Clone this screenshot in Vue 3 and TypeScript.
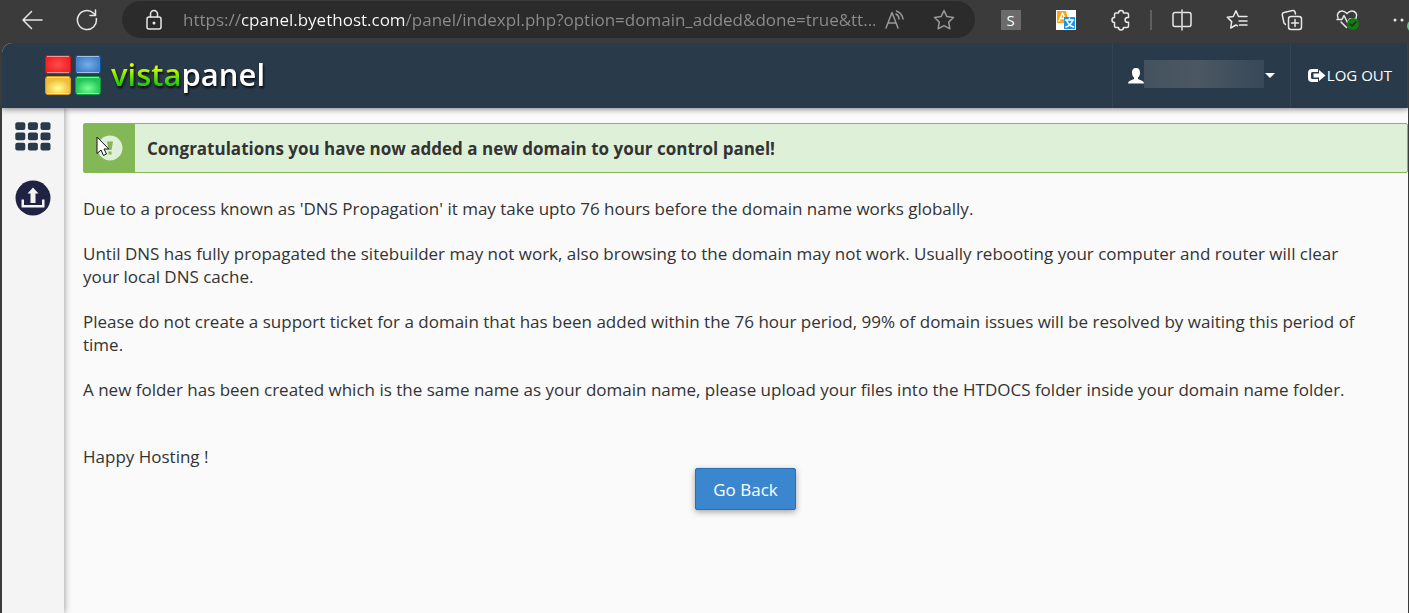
<script setup lang="ts">
import { ref } from 'vue'

const address = ref('https://cpanel.byethost.com/panel/indexpl.php?option=domain_added&done=true&tt...')

const paragraphs: string[] = [
  "Due to a process known as 'DNS Propagation' it may take upto 76 hours before the domain name works globally.",
  'Until DNS has fully propagated the sitebuilder may not work, also browsing to the domain may not work. Usually rebooting your computer and router will clear your local DNS cache.',
  'Please do not create a support ticket for a domain that has been added within the 76 hour period, 99% of domain issues will be resolved by waiting this period of time.',
  'A new folder has been created which is the same name as your domain name, please upload your files into the HTDOCS folder inside your domain name folder.',
]
</script>

<template>
  <div class="window">
    <div class="toolbar">
      <button class="tool nav" aria-label="Back">
        <svg width="22" height="20" viewBox="0 0 22 20"><path d="M10.500 1.500 2 10l8.500 8.500M2 10h19" /></svg>
      </button>
      <button class="tool nav" aria-label="Refresh">
        <svg width="22" height="22" viewBox="0 0 22 22"><path d="M20.300 9.500A9.500 9.500 0 1 1 17.500 4.200L19.500 6M19.500 1v5.500H14" /></svg>
      </button>
      <div class="address">
        <button class="tool lock" aria-label="Site information">
          <svg width="18" height="22" viewBox="0 0 18 22">
            <rect x="2" y="8" width="14" height="12" rx="2" />
            <path d="M5.500 8V5a3.500 3.500 0 0 1 7 0v3" /><circle class="solid" cx="9" cy="14" r="1.500" />
          </svg>
        </button>
        <input v-model="address" class="url" type="text" aria-label="Address" spellcheck="false" />
        <button class="tool dim" aria-label="Read aloud">
          <svg width="22" height="20" viewBox="0 0 22 20">
            <path d="m2 18 6-15.500L14 18M4 13h8M12 4c2 1 3 3 3 5M12.500 1c3.500 1.500 6 4 6.500 8" />
          </svg>
        </button>
        <button class="tool dim star" aria-label="Add to favourites">
          <svg width="22" height="22" viewBox="0 0 22 22"><path d="m11 1.500 2.900 6.100 6.600.9-4.800 4.600 1.200 6.700L11 16.600l-5.900 3.200 1.200-6.700L1.500 8.500l6.600-.9z" /></svg>
        </button>
      </div>
      <div class="extensions">
        <button class="tool" aria-label="S extension"><span class="letter">S</span></button>
        <button class="tool" aria-label="Translate">
          <svg width="20" height="20" viewBox="0 0 20 20">
            <path class="white" d="M0 0h20v20H0z" /><path class="orange" d="M1 1h9l3 12H1z" />
            <path class="mark" d="m3 11 3.500-8L10 11M4.500 8.500h4" />
            <path class="azure" d="M8 7h11v12H8z" />
            <path class="mark" d="M9.500 10h8M13.500 8v2M16.500 10.500c-1 3-3.500 5.500-6.500 6.500M11 11c1 3 3.500 5 6.500 6" />
          </svg>
        </button>
        <button class="tool" aria-label="Extensions">
          <svg width="22" height="22" viewBox="0 0 22 22">
            <path d="M6 4h2.500a2.500 2.500 0 0 1 5 0H17a1.500 1.500 0 0 1 1.500 1.500V8.500h-1a2.300 2.300 0 0 0 0 4.800h1v3.700a1.500 1.500 0 0 1-1.500 1.500h-3.500a2.500 2.500 0 0 1-5 0H6A1.500 1.500 0 0 1 4.500 17v-3.500a2.500 2.500 0 0 1 0-5v-3A1.500 1.500 0 0 1 6 4z" />
          </svg>
        </button>
        <span class="divider"></span>
        <button class="tool" aria-label="Split screen">
          <svg width="22" height="22" viewBox="0 0 22 22"><path d="M9.500 3.500H4A2 2 0 0 0 2 5.500v10a2 2 0 0 0 2 2h5.500M12.500 3.500H18a2 2 0 0 1 2 2v10a2 2 0 0 1-2 2h-5.500M11 1v20" /></svg>
        </button>
        <button class="tool" aria-label="Favourites">
          <svg width="22" height="22" viewBox="0 0 22 22">
            <path d="M12.500 7.500 10 1.800 7.300 7.500l-6 .8 4.400 4.300-1 6.400 5.300-3 1.500.8M12.500 7.500H21M13 12h8M13.500 16H21" />
          </svg>
        </button>
        <button class="tool" aria-label="Collections">
          <svg width="22" height="22" viewBox="0 0 22 22">
            <rect x="7.500" y="7.500" width="13" height="13" rx="2.500" /><path d="M14 10.500v7M10.500 14h7M4.500 15.500 3 14 1.300 6A2 2 0 0 1 3 3.600l8.500-2A2 2 0 0 1 14 3l.5 2" />
          </svg>
        </button>
        <button class="tool" aria-label="Browser essentials">
          <svg width="26" height="22" viewBox="-2 0 26 22">
            <path d="M2 9C0 5 3 2 6 2c2.500 0 3.500 1 5 2.500C12.500 3 13.500 2 16 2c3 0 6 3 4 7M1 10.500h5l2-4 3.500 7 2-3.500H20M5 13l5.500 5.500" />
            <circle class="green" cx="17" cy="15" r="6" /><path class="tick" d="m14 15 2 2 4-4" />
          </svg>
        </button>
        <button class="tool" aria-label="Settings and more">
          <svg width="26" height="26" viewBox="0 0 26 26">
            <g class="solid"><circle cx="6" cy="13" r="1.500" /><circle cx="13" cy="13" r="1.500" /></g>
            <circle class="mint" cx="24" cy="19" r="6" />
          </svg>
        </button>
      </div>
    </div>

    <div class="page">
      <header class="header">
        <a class="brand" href="#" aria-label="vistapanel">
          <svg class="tiles" width="58" height="43" viewBox="0 0 58 43">
            <defs>
              <radialGradient id="red"><stop offset="0" stop-color="#ff4d4d" /><stop offset="1" stop-color="#f32323" /></radialGradient>
              <radialGradient id="blue"><stop offset="0" stop-color="#77adea" /><stop offset="1" stop-color="#427fc8" /></radialGradient>
              <radialGradient id="yellow" cy="65%"><stop offset="0" stop-color="#ffff90" /><stop offset="1" stop-color="#efbd3d" /></radialGradient>
              <radialGradient id="green" cy="65%"><stop offset="0" stop-color="#78ff96" /><stop offset="1" stop-color="#24c65a" /></radialGradient>
            </defs>
            <g stroke-width="1">
              <rect x="1.500" y="1.500" width="25" height="18" rx="2.500" fill="url(#red)" stroke="#ce1818" />
              <rect x="31.500" y="1.500" width="25" height="18" rx="2.500" fill="url(#blue)" stroke="#08529e" />
              <rect x="1.500" y="22.500" width="25" height="18" rx="2.500" fill="url(#yellow)" stroke="#d89a19" />
              <rect x="31.500" y="22.500" width="25" height="18" rx="2.500" fill="url(#green)" stroke="#0b9d3c" />
            </g>
            <path d="M3 2.500h22M33 2.500h22M3 23.500h22M33 23.500h22M3 18.500h22M33 18.500h22M3 39.500h22M33 39.500h22" stroke="#fff" stroke-opacity=".5" />
          </svg>
          <span class="name"><span class="vista">vista</span><span class="panel">panel</span></span>
        </a>
        <nav class="account">
          <button class="user" aria-label="Account menu">
            <svg width="16" height="16" viewBox="0 0 16 16"><path d="M8 0C5 0 4 2 4 5c0 2 1 3.500 2 4.500V11l-4.500 2Q0 13.500 0 15.500h16q0-2-1.500-2.500L10 11V9.500c1-1 2-2.500 2-4.500 0-3-1-5-4-5z" /></svg>
            <span class="redacted"></span>
            <svg class="caret" width="10" height="5" viewBox="0 0 10 5"><path d="M0 0h10L5 5z" /></svg>
          </button>
          <a class="logout" href="#">
            <svg width="18" height="14" viewBox="0 0 18 14">
              <path d="M10 0H4Q0 0 0 4v5q0 4 4 4h6v-3H4.500Q3 10 3 8.500v-4Q3 3 4.500 3H10zM11 1v3.500H5.500v4H11V12l6.500-5.500z" />
            </svg>
            <span>LOG OUT</span>
          </a>
        </nav>
      </header>

      <div class="body">
        <aside class="sidebar">
          <a href="#" aria-label="Control panel">
            <svg width="36" height="29" viewBox="0 0 36 29">
              <g fill="#293a4a">
                <template v-for="row in 3" :key="row">
                  <rect v-for="col in 3" :key="col" :x="(col - 1) * 12.600 + 0.300" :y="(row - 1) * 10.200 + 0.300" width="10" height="7.800" rx="2" />
                </template>
              </g>
            </svg>
          </a>
          <a href="#" aria-label="Upload">
            <svg width="36" height="36" viewBox="0 0 36 36">
              <circle cx="18" cy="18" r="17.500" fill="#202244" />
              <path d="M18 7.500 12.500 13.500h3V23h5v-9.500h3zM6.500 19.500v8h23v-8H27V25H9v-5.500z" fill="#f4f4f4" />
            </svg>
          </a>
        </aside>

        <main class="content">
          <div class="alert" role="status">
            <div class="badge">
              <svg width="26" height="26" viewBox="0 0 26 26">
                <circle cx="13" cy="13" r="12.500" fill="#dff0d8" />
                <path d="M10 6.500h6L14.500 15h-3zM11.500 16.500h3v3h-3z" fill="#84b756" />
              </svg>
              <svg class="pointer" width="14" height="22" viewBox="0 0 14 22">
                <path d="M1 1v16.500l4-3.500 2.500 5.500 3-1.500-2.500-5h4.800z" fill="#fff" stroke="#111" />
              </svg>
            </div>
            <strong class="message">Congratulations you have now added a new domain to your control panel!</strong>
          </div>
          <div class="text">
            <p v-for="text in paragraphs" :key="text">{{ text }}</p>
            <p class="closing">Happy Hosting !</p>
          </div>
          <button class="back">Go Back</button>
        </main>
      </div>
    </div>
  </div>
</template>

<style>
html,
body {
  background: #3b3b3b;
}
body {
  margin: 0;
  overflow: hidden;
}
</style>

<style scoped>
.window {
  display: flex;
  flex-direction: column;
  min-height: 100vh;
  background: #3b3b3b;
  color: #333;
  font-family: "Open Sans", "Noto Sans", sans-serif;
  font-size: 17px;
  line-height: 23px;
}
button {
  margin: 0;
  padding: 0;
  border: 0;
  background: none;
  font: inherit;
  cursor: pointer;
}
svg {
  display: block;
  flex: none;
}
a {
  color: inherit;
  text-decoration: none;
}
.toolbar {
  display: flex;
  align-items: center;
  height: 39px;
  padding-bottom: 4px;
  padding-left: 4px;
  overflow: hidden;
}
.tool {
  display: flex;
  flex: none;
  align-items: center;
  justify-content: center;
  width: 55px;
  height: 36px;
  color: #e8e8e8;
}
.tool svg {
  fill: none;
  stroke: currentColor;
  stroke-width: 1.5;
  stroke-linecap: round;
  stroke-linejoin: round;
}
.tool .solid {
  fill: currentColor;
  stroke: none;
}
.tool .white {
  fill: #fff;
  stroke: none;
}
.tool .orange {
  fill: #ffa412;
  stroke: none;
}
.tool .azure {
  fill: #1496ee;
  stroke: none;
}
.tool .mark {
  stroke: #fff;
}
.tool .green {
  fill: #107c10;
  stroke: none;
}
.tool .tick {
  stroke: #222;
}
.tool .mint {
  fill: #6cc58c;
  stroke: none;
}
.address {
  display: flex;
  flex: 1;
  align-items: center;
  min-width: 0;
  height: 37px;
  margin-left: 8px;
  border-radius: 19px;
  background: #2b2b2b;
}
.tool.lock {
  width: 61px;
  padding-left: 3px;
}
.url {
  flex: 1;
  min-width: 0;
  height: 30px;
  padding: 0;
  border: 0;
  outline: 0;
  background: linear-gradient(90deg, #8d8d8d 58px, #fff 58px 223px, #8d8d8d 223px);
  background-clip: text;
  color: transparent;
  font: 17px/30px "Open Sans", "Noto Sans", sans-serif;
}
.tool.dim {
  width: 40px;
  color: #999;
}
.tool.star {
  width: 58px;
  margin-right: 2px;
}
.extensions {
  display: flex;
  flex: none;
  align-items: center;
  margin-right: -20px;
  padding-left: 8px;
}
.letter {
  width: 20px;
  height: 20px;
  background: #6b6b6b;
  color: #fff;
  font-size: 15px;
  line-height: 20px;
}
.divider {
  width: 2px;
  height: 20px;
  margin: 0 2px;
  background: #606060;
}
.page {
  display: flex;
  flex: 1;
  flex-direction: column;
  margin: 0 1px 0 2px;
  border-radius: 10px 0 0 0;
  background: #fafafa;
  overflow: hidden;
}
.header {
  display: flex;
  position: relative;
  z-index: 2;
  justify-content: space-between;
  height: 65px;
  background: #293a4a;
  box-shadow: 0 1px 6px rgba(0, 0, 0, 0.5);
}
.brand {
  display: flex;
  align-items: center;
  gap: 9px;
  padding-left: 42px;
}
.name {
  padding-bottom: 4px;
  color: #fff;
  font-size: 31px;
  font-weight: 600;
  line-height: 40px;
  filter: drop-shadow(1px 2px 1px rgba(0, 0, 0, 0.8));
}
.vista {
  background: linear-gradient(#d8ff00 35%, #22cc00 75%);
  background-clip: text;
  color: transparent;
}
.account {
  display: flex;
}
.user,
.logout {
  display: flex;
  align-items: center;
  border-left: 1px solid #344454;
  color: #fff;
}
.user {
  padding: 0 15px;
}
.user svg,
.logout svg {
  fill: currentColor;
}
.redacted {
  width: 120px;
  height: 28px;
  margin-right: 1px;
  margin-bottom: 3px;
  background: linear-gradient(90deg, #44525f, #4b5863 45%, #384858);
}
.logout {
  gap: 1px;
  padding: 0 15px 0 17px;
  border-right: 1px solid #344454;
  font-size: 15px;
}
.body {
  display: flex;
  flex: 1;
}
.sidebar {
  display: flex;
  z-index: 1;
  flex: none;
  flex-direction: column;
  align-items: center;
  gap: 29px;
  width: 62px;
  padding-top: 14px;
  background: #f4f4f4;
  box-shadow: 1px 0 6px rgba(0, 0, 0, 0.35);
}
.content {
  display: flex;
  flex: 1;
  flex-direction: column;
  min-width: 0;
  padding: 15px 0 24px 19px;
}
.alert {
  display: flex;
  box-sizing: border-box;
  min-height: 50px;
  margin-bottom: 24px;
  border: 1px solid #84b756;
  border-radius: 2px;
  background: #dff0d8;
}
.badge {
  display: flex;
  position: relative;
  flex: none;
  align-items: center;
  justify-content: center;
  width: 51px;
  background: #84b756;
}
.pointer {
  position: absolute;
  top: 12px;
  left: 12px;
}
.message {
  align-self: center;
  padding-left: 12px;
  font-weight: 700;
}
.text {
  padding-right: 40px;
}
p {
  margin: 0 0 22px;
}
.closing {
  margin: 44px 0 0;
}
.back {
  align-self: center;
  height: 42px;
  padding: 0 17px;
  border: 1px solid #2a6fb0;
  border-radius: 2px;
  background: #3a87cf;
  box-shadow: 0 2px 6px rgba(0, 0, 0, 0.35);
  color: #fff;
}
</style>
